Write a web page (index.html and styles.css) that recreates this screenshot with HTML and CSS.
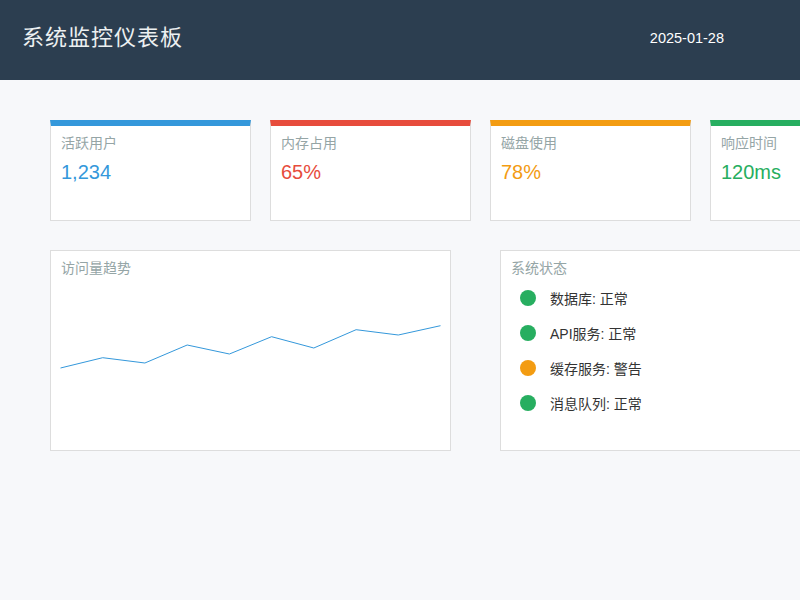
FILE: index.html
```html
<!DOCTYPE html>
<html lang="zh-CN">
<head>
<meta charset="utf-8">
<title>系统监控仪表板</title>
<link rel="stylesheet" href="styles.css">
</head>
<body>
<header class="topbar">
  <h1 class="title">系统监控仪表板</h1>
  <span class="date">2025-01-28</span>
</header>
<main class="content">
  <section class="cards">
    <div class="card card-blue">
      <div class="card-label">活跃用户</div>
      <div class="card-value">1,234</div>
    </div>
    <div class="card card-red">
      <div class="card-label">内存占用</div>
      <div class="card-value">65%</div>
    </div>
    <div class="card card-orange">
      <div class="card-label">磁盘使用</div>
      <div class="card-value">78%</div>
    </div>
    <div class="card card-green">
      <div class="card-label">响应时间</div>
      <div class="card-value">120ms</div>
    </div>
  </section>
  <section class="panels">
    <div class="panel chart-panel">
      <div class="panel-title">访问量趋势</div>
      <svg class="chart" width="382" height="100" viewBox="0 0 382 100">
        <polyline fill="none" stroke="#3498db" stroke-width="1" points="0.5,88 42.7,77.7 84.9,83 127.2,65 169.4,74 211.6,56.7 253.8,68 296.1,49.7 338.3,55 380.5,45.7"/>
      </svg>
    </div>
    <div class="panel status-panel">
      <div class="panel-title">系统状态</div>
      <ul class="status-list">
        <li class="status-item"><span class="dot dot-ok"></span>数据库: 正常</li>
        <li class="status-item"><span class="dot dot-ok"></span>API服务: 正常</li>
        <li class="status-item"><span class="dot dot-warn"></span>缓存服务: 警告</li>
        <li class="status-item"><span class="dot dot-ok"></span>消息队列: 正常</li>
      </ul>
    </div>
  </section>
</main>
</body>
</html>
```

FILE: styles.css
```css
html, body {
  margin: 0;
  padding: 0;
  overflow: hidden;
}
body {
  background: #f7f8fa;
  font-family: "Liberation Sans", Arial, "Noto Sans CJK SC", sans-serif;
  color: #333;
  width: 800px;
  height: 600px;
}
.topbar {
  height: 80px;
  background: #2c3e50;
  display: flex;
  align-items: center;
  justify-content: space-between;
  padding: 0 76px 0 22px;
  box-sizing: border-box;
}
.title {
  margin: 0;
  font-size: 22px;
  font-weight: normal;
  color: #ecf0f1;
  line-height: 26px;
  margin-top: -4px;
  letter-spacing: 1px;
}
.date {
  font-size: 14.5px;
  color: #fff;
  margin-top: -4px;
}
.content {
  padding: 40px 0 0 50px;
  width: 1100px;
}
.cards {
  display: flex;
  gap: 19px;
}
.card {
  box-sizing: border-box;
  width: 201px;
  height: 101px;
  background: #fff;
  border: 1px solid #ddd;
  border-top: 6px solid #3498db;
  padding: 9px 10px;
}
.card-blue { border-top-color: #3498db; }
.card-red { border-top-color: #e74c3c; }
.card-orange { border-top-color: #f39c12; }
.card-green { border-top-color: #27ae60; }
.card-blue .card-value { color: #3498db; }
.card-red .card-value { color: #e74c3c; }
.card-orange .card-value { color: #f39c12; }
.card-green .card-value { color: #27ae60; }
.card-label {
  font-size: 14px;
  line-height: 16px;
  color: #95a5a6;
}
.card-value {
  font-size: 20px;
  line-height: 24px;
  margin-top: 9px;
}
.panels {
  display: flex;
  gap: 49px;
  margin-top: 29px;
}
.panel {
  box-sizing: border-box;
  width: 401px;
  height: 201px;
  background: #fff;
  border: 1px solid #ddd;
  padding: 9px 10px;
}
.panel-title {
  font-size: 14px;
  line-height: 16px;
  color: #95a5a6;
}
.chart {
  display: block;
  margin: 4px 0 0 -1px;
}
.status-list {
  list-style: none;
  margin: 4px 0 0 0;
  padding: 0;
}
.status-item {
  height: 35px;
  display: flex;
  align-items: center;
  font-size: 14px;
  color: #333;
}
.dot {
  width: 16px;
  height: 16px;
  border-radius: 50%;
  margin: 0 14px 0 9px;
  flex: none;
}
.dot-ok { background: #27ae60; }
.dot-warn { background: #f39c12; }
```
